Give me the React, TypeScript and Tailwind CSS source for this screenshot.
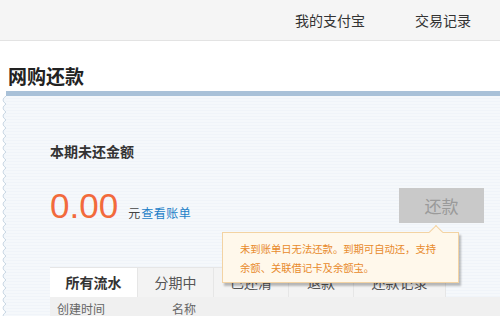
import React from "react";

const cjk = { fontFamily: '"Noto Sans CJK SC", "Liberation Sans", sans-serif' };

function ScallopEdge() {
  return (
    <svg width="6" height="220" className="shrink-0 block">
      <defs>
        <pattern id="scallop" width="6" height="8" patternUnits="userSpaceOnUse">
          <path d="M6 0 Q0 4 6 8 Z" fill="#f3f7fb" />
          <path d="M6 0 Q0 4 6 8" fill="none" stroke="#c9d7e3" strokeWidth="1" />
        </pattern>
      </defs>
      <rect x="0" y="0" width="6" height="220" fill="url(#scallop)" />
    </svg>
  );
}

const tabs = [
  { label: "所有流水", w: "w-[88px]", active: true },
  { label: "分期中", w: "w-[76px]" },
  { label: "已还清", w: "w-[75px]" },
  { label: "退款", w: "w-[65px]" },
  { label: "还款记录", w: "w-[92px]" },
];

export default function App() {
  return (
    <div className="w-[500px] h-[316px] overflow-hidden bg-white text-[#333]" style={cjk}>
      <header className="h-[41px] bg-[#f5f5f5] border-b border-[#e3e3e3] flex items-center justify-end gap-[50px] pr-[29px] text-[14px]">
        <a>我的支付宝</a>
        <a>交易记录</a>
      </header>

      <h1 className="h-[50px] pt-[24px] pl-[8px] text-[19px] leading-[22px] font-bold text-[#222]">网购还款</h1>

      <div className="ml-[6px] h-[5px] bg-[#a9c1d8]" />

      <div className="flex">
        <ScallopEdge />
        <div className="flex-1 relative bg-[repeating-linear-gradient(180deg,#f5f8fb_0px,#f5f8fb_2px,#f0f4f9_2px,#f0f4f9_3px)] pt-[47px] pl-[44px]">
          <div className="text-[14px] leading-[17px] font-bold text-[#333]">本期未还金额</div>

          <div className="mt-[28px] flex items-start justify-between pr-[16px]">
            <div className="flex items-baseline">
              <span className="text-[35px] leading-none text-[#f26a3c]" style={{ fontFamily: '"Liberation Sans", Arial, sans-serif' }}>
                0.00
              </span>
              <span className="ml-[10px] text-[12px] text-[#444]">元</span>
              <a className="ml-[1px] text-[12px] tracking-[0.5px] text-[#1d7fc7]">查看账单</a>
            </div>
            <button className="w-[85px] h-[35px] bg-[#c9c9c9] text-[17px] text-[#9a9a9a]">还款</button>
          </div>

          <div className="mt-[44px] flex h-[30px] bg-[#f3f3f3] border-t border-[#e6e6e6] w-[396px]">
            {tabs.map((t) => (
              <div
                key={t.label}
                className={`${t.w} shrink-0 flex items-center justify-center text-[14px] border-r border-[#e6e6e6] ${
                  t.active ? "bg-white font-bold text-[#333]" : "text-[#555]"
                }`}
              >
                {t.label}
              </div>
            ))}
          </div>
          <div className="h-[24px] bg-[#f0f0f0] flex items-center text-[12px] text-[#666]">
            <span className="pl-[7px] w-[122px]">创建时间</span>
            <span>名称</span>
          </div>

          <div className="absolute left-[216px] top-[136px] w-[237px] h-[51px] bg-[#fff8eb] border border-[#f3d3a3] shadow-[2px_3px_2px_rgba(0,0,0,0.25)] pl-[17px] pt-[6px] text-[#e88a2c]">
            <div className="absolute -top-[6px] left-[208px] w-[10px] h-[10px] rotate-45 bg-[#fff8eb] border-l border-t border-[#f3d3a3]" />
            <div className="relative [transform-origin:0_0] [transform:scale(0.86)] text-[12px] leading-[22px] whitespace-nowrap">
              <p>未到账单日无法还款。到期可自动还，支持</p>
              <p>余额、关联借记卡及余额宝。</p>
            </div>
          </div>
        </div>
      </div>
    </div>
  );
}
